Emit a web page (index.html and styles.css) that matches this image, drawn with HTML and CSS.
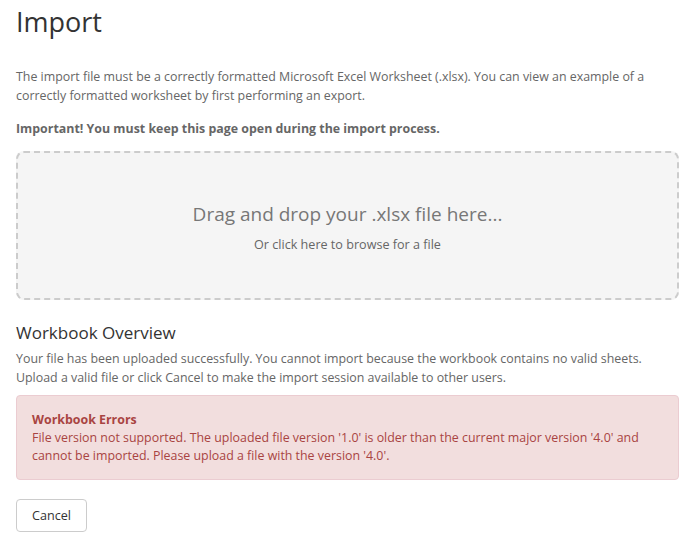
FILE: index.html
```html
<!DOCTYPE html>
<html lang="en">
<head>
    <meta charset="UTF-8">
    <title>Import</title>
    <link rel="stylesheet" href="styles.css">
</head>
<body>
    <div class="page">
        <h1>Import</h1>

        <p class="intro">The import file must be a correctly formatted Microsoft Excel Worksheet (.xlsx). You can view an example of a correctly formatted worksheet by first performing an export.</p>
        <p class="warning">Important! You must keep this page open during the import process.</p>

        <div class="dropzone">
            <div class="drop-title">Drag and drop your .xlsx file here...</div>
            <div class="drop-sub">Or click here to browse for a file</div>
        </div>

        <h2>Workbook Overview</h2>
        <p class="overview">Your file has been uploaded successfully. You cannot import because the workbook contains no valid sheets. Upload a valid file or click Cancel to make the import session available to other users.</p>

        <div class="alert">
            <strong>Workbook Errors</strong>
            <div>File version not supported. The uploaded file version '1.0' is older than the current major version '4.0' and cannot be imported. Please upload a file with the version '4.0'.</div>
        </div>

        <button class="btn">Cancel</button>
    </div>
</body>
</html>
```

FILE: styles.css
```css
body {
    margin: 0;
    font-family: "Open Sans", sans-serif;
    font-size: 12.4px;
    line-height: 19px;
    color: #666;
    background: #fff;
}

.page {
    padding: 0 15px 0 16px;
}

h1 {
    margin: 0;
    padding-top: 4px;
    font-size: 27px;
    line-height: 36px;
    font-weight: 400;
    color: #333;
}

.intro {
    margin: 27px 0 0;
}

.warning {
    margin: 14px 0 0;
    font-weight: 700;
}

.dropzone {
    margin-top: 13px;
    height: 142px;
    padding-top: 3px;
    border: 2px dashed #ccc;
    border-radius: 8px;
    background: #f5f5f5;
    display: flex;
    flex-direction: column;
    align-items: center;
    justify-content: center;
    cursor: pointer;
}

.drop-title {
    font-size: 19px;
    line-height: 26px;
    color: #777;
}

.drop-sub {
    margin-top: 8px;
    font-size: 12.6px;
    color: #666;
}

h2 {
    margin: 21px 0 0;
    font-size: 17px;
    line-height: 24px;
    font-weight: 400;
    color: #333;
}

.overview {
    margin: 4px 0 0;
}

.alert {
    margin-top: 8px;
    padding: 15px 15px 14px;
    line-height: 18px;
    background: #f2dede;
    border: 1px solid #ebccd1;
    border-radius: 4px;
    color: #a94442;
}

.btn {
    margin-top: 19px;
    padding: 6px 15px;
    font-family: inherit;
    font-size: 12.6px;
    line-height: 19px;
    color: #333;
    background: #fff;
    border: 1px solid #ccc;
    border-radius: 4px;
    cursor: pointer;
}
```
